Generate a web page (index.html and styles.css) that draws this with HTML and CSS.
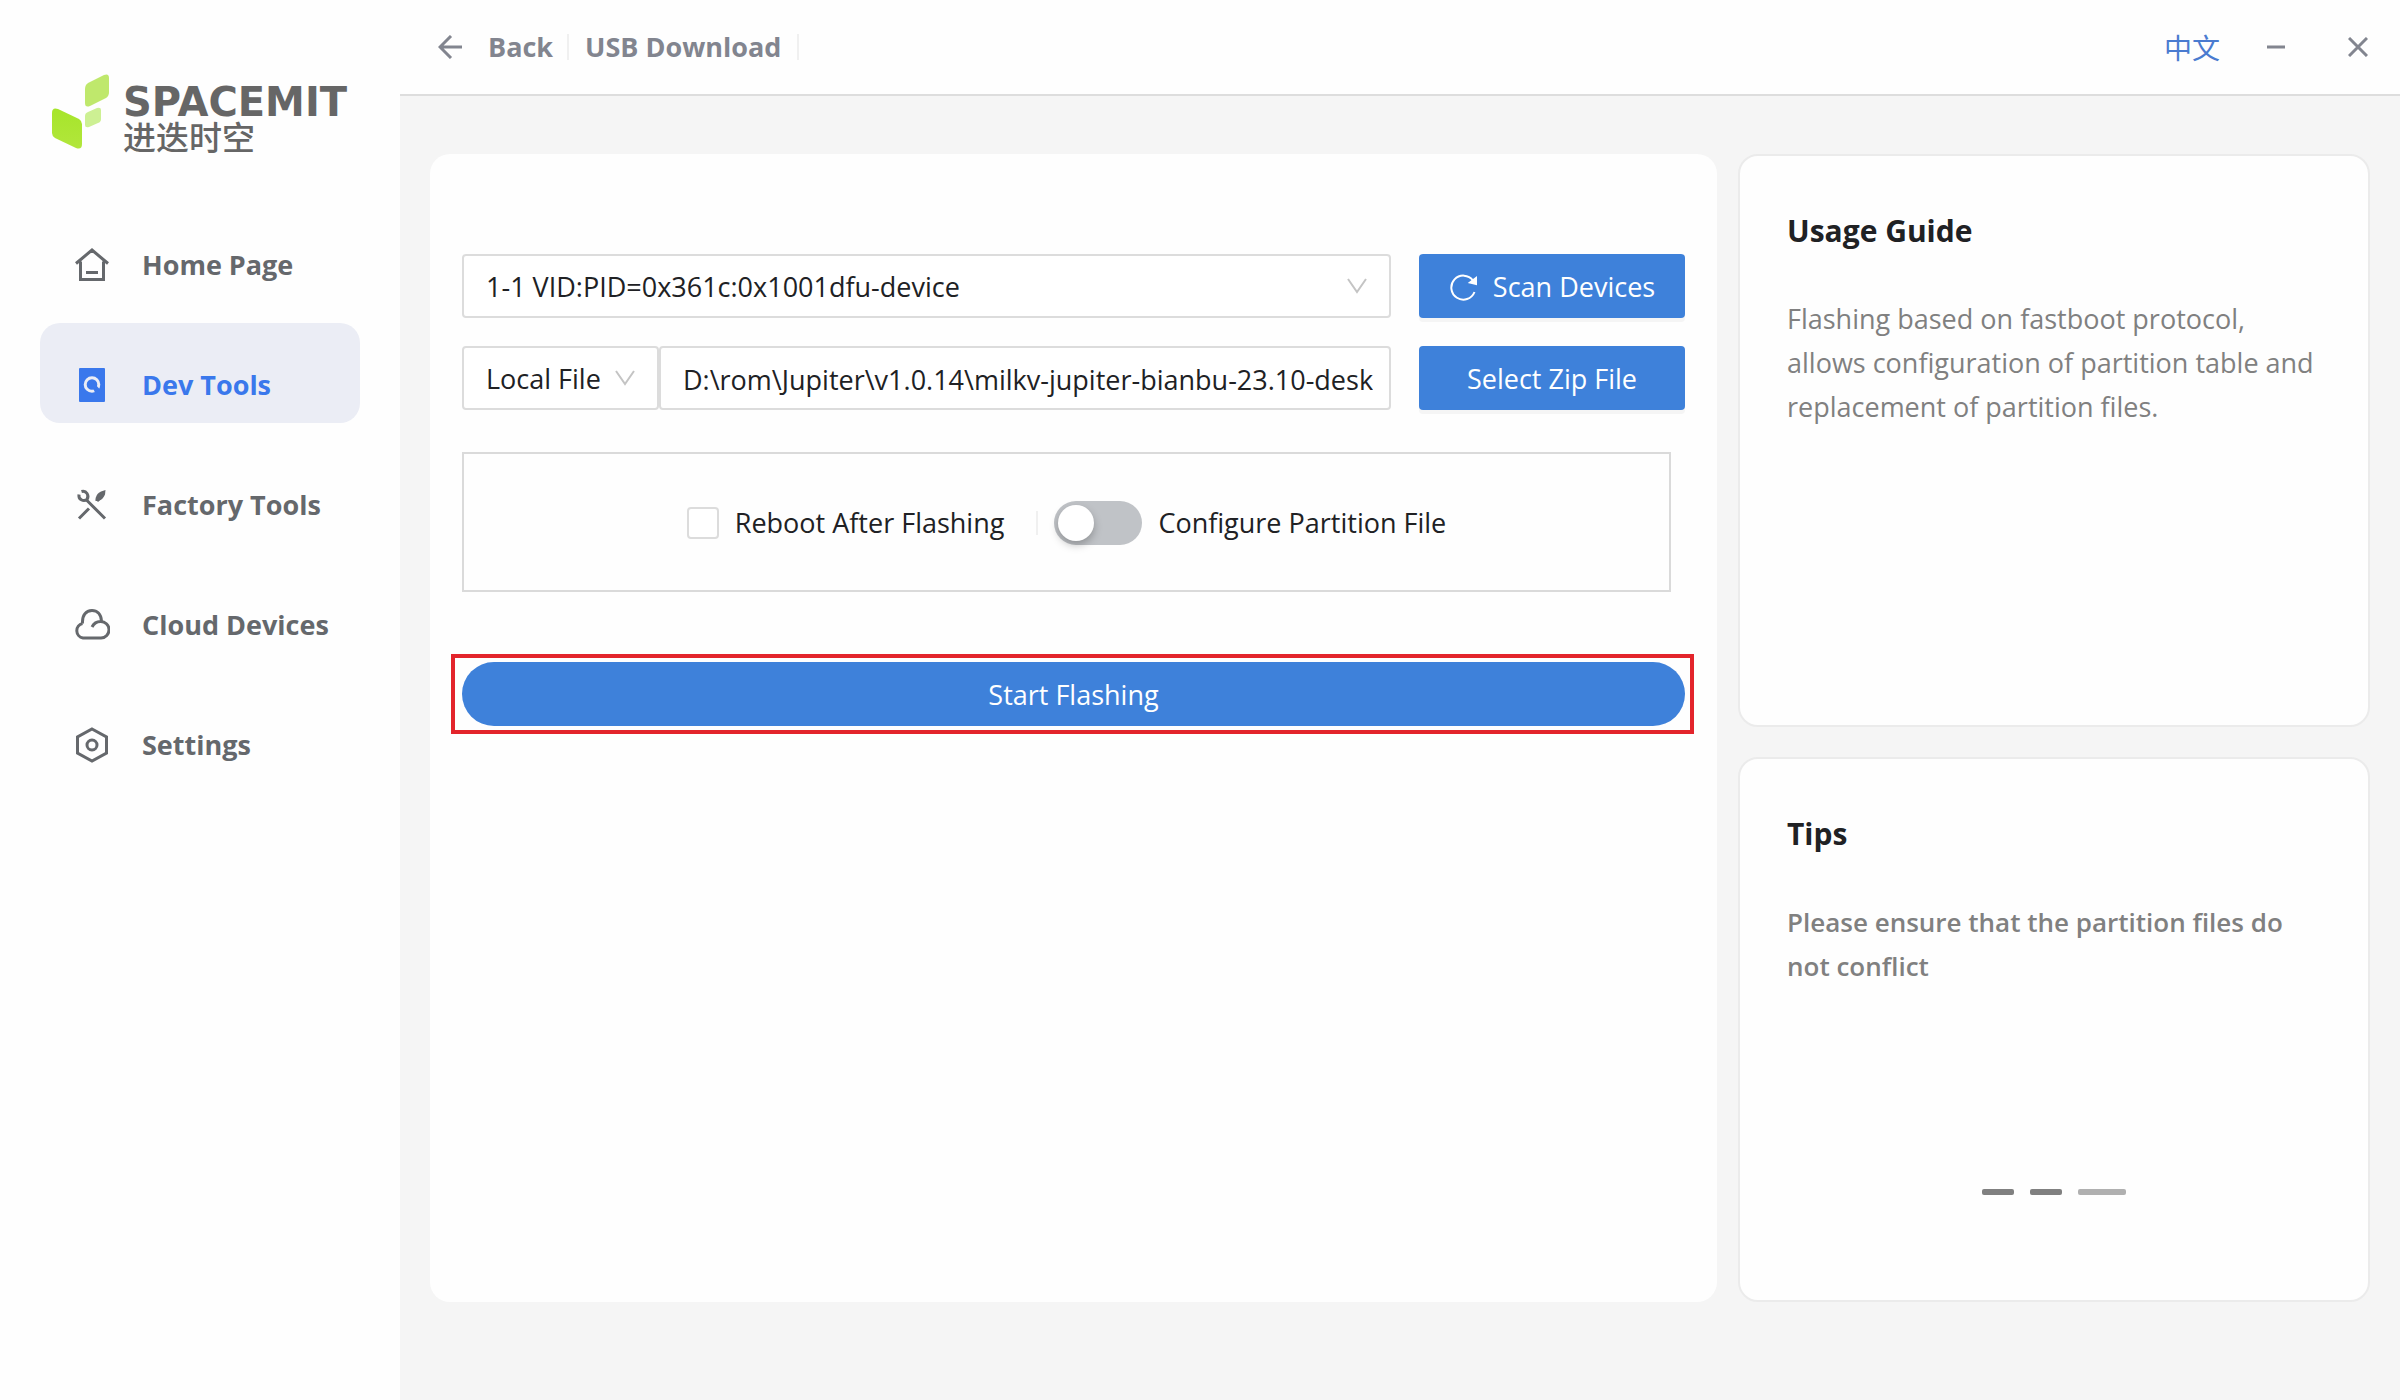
FILE: index.html
```html
<!DOCTYPE html>
<html lang="en">
<head>
<meta charset="utf-8">
<meta name="viewport" content="width=device-width, initial-scale=1">
<title>USB Download</title>
<link rel="stylesheet" href="styles.css">
</head>
<body>
<div class="app">
  <aside class="sidebar">
    <div class="brand">
      <svg class="brand-mark" viewBox="0 0 60 76" aria-hidden="true">
        <defs>
          <linearGradient id="leaf" x1="0" y1="0" x2="0" y2="1"><stop offset="0" stop-color="#a6e52a"/><stop offset="1" stop-color="#b2e63c"/></linearGradient>
        </defs>
        <path fill="url(#leaf)" d="M1 39q0-6 6-4l21 10q3 2 3 5v20q0 6-6 4L4 64q-3-2-3-5z"/>
        <path fill="#bfe86c" d="M34 15q0-4 3-6L53 1q5-2 5 3v14q0 4-3 6L39 32q-5 2-5-3z"/>
        <path fill="#cdf093" d="M34 42q0-3 3-4l9-4q4-1 4 2v9q0 3-3 4l-9 4q-4 1-4-2z"/>
      </svg>
      <div class="brand-text">
        <span class="brand-name">SPACEMIT</span>
        <span class="brand-sub" lang="zh">进迭时空</span>
      </div>
    </div>
    <nav class="nav" aria-label="Main">
      <a class="nav-item" href="#home">
        <svg class="nav-icon" viewBox="0 0 36 36" aria-hidden="true"><path d="M2 16.500 18 3l16 13.500M6.500 14.500V32.500h23V14.500M12 25.500h12"/></svg>
        Home Page
      </a>
      <a class="nav-item nav-item-active" href="#dev" aria-current="page">
        <svg class="nav-icon" viewBox="0 0 36 36" aria-hidden="true"><rect class="solid" x="5" y="1" width="26" height="34" rx="1"/><circle class="dial" cx="18" cy="17.500" r="6.800"/><path class="solid" d="M17 17l3-1 6 6.500-3 3h-2z"/></svg>
        Dev Tools
      </a>
      <a class="nav-item" href="#factory">
        <svg class="nav-icon" viewBox="0 0 36 36" aria-hidden="true"><path d="M12.500 13 31 31.500M5 31.500l10-10M23 14l3.500-3.500"/><path d="M7.500 4.500c5-1.500 8 4 5.500 8-3.500 2.500-9 0-8-5"/><path class="solid" d="M21.500 14c-.5-4 2-8 5.500-9.500l4.500-1.500L31 7.500c-1.500 4-5 7-9.500 6.500z"/></svg>
        Factory Tools
      </a>
      <a class="nav-item" href="#cloud">
        <svg class="nav-icon" viewBox="0 0 36 36" aria-hidden="true"><path d="M8.500 16.500C8 8 12 3.500 18 3.500c5 0 9 3.500 9.500 10.500M18 20c2-4 5-5.500 8.500-5.500a8 8 0 0 1 .5 16.500H9a7.400 7.400 0 0 1-.5-14.500"/></svg>
        Cloud Devices
      </a>
      <a class="nav-item" href="#settings">
        <svg class="nav-icon" viewBox="0 0 36 36" aria-hidden="true"><path d="M18 2 32.500 10v16L18 34 3.500 26V10z"/><circle cx="18" cy="18" r="5"/></svg>
        Settings
      </a>
    </nav>
  </aside>

  <div class="content">
    <header class="topbar">
      <button class="back" type="button">
        <svg class="back-icon" viewBox="0 0 24 24" aria-hidden="true"><path d="M13 1 2 12l11 11M2 12h22"/></svg>
        Back
      </button>
      <h1 class="page-title">USB Download</h1>
      <div class="window-tools">
        <button class="lang" type="button" lang="zh">中文</button>
        <button class="win-button" type="button" aria-label="Minimize"><svg class="win-icon" viewBox="0 0 20 20" aria-hidden="true"><path d="M1 10h18"/></svg></button>
        <button class="win-button" type="button" aria-label="Close"><svg class="win-icon" viewBox="0 0 20 20" aria-hidden="true"><path d="M1 1l18 18M19 1 1 19"/></svg></button>
      </div>
    </header>

    <main class="workspace">
      <form class="panel flash-form">
        <div class="form-row">
          <div class="select-box">
            <select class="field" aria-label="Device"><option>1-1 VID:PID=0x361c:0x1001dfu-device</option></select>
            <svg class="chevron" viewBox="0 0 20 16" aria-hidden="true"><path d="M1 1l9 13 9-13"/></svg>
          </div>
          <button class="action" type="button">
            <svg class="action-icon" viewBox="0 0 28 28" aria-hidden="true"><path d="M25.500 19A12 12 0 1 1 24 7.500"/><path class="tip" d="M27 5v6l-6-1.500z"/></svg>
            Scan Devices
          </button>
        </div>
        <div class="form-row">
          <div class="source">
            <div class="select-box">
              <select class="field" aria-label="Image source"><option>Local File</option></select>
              <svg class="chevron" viewBox="0 0 20 16" aria-hidden="true"><path d="M1 1l9 13 9-13"/></svg>
            </div>
            <input class="field path" type="text" aria-label="Image path" value="D:\rom\Jupiter\v1.0.14\milkv-jupiter-bianbu-23.10-desk">
          </div>
          <button class="action" type="button">Select Zip File</button>
        </div>
        <div class="options">
          <label class="option reboot"><input class="check" type="checkbox">Reboot After Flashing</label>
          <label class="option"><input class="switch" type="checkbox" role="switch">Configure Partition File</label>
        </div>
        <div class="highlight">
          <button class="start" type="submit">Start Flashing</button>
        </div>
      </form>

      <section class="panel info">
        <h2 class="info-title">Usage Guide</h2>
        <p class="info-text">Flashing based on fastboot protocol, allows configuration of partition table and replacement of partition files.</p>
      </section>
      <section class="panel info">
        <h2 class="info-title">Tips</h2>
        <p class="info-text info-strong">Please ensure that the partition files do not conflict</p>
        <div class="pager">
          <button class="dash" type="button" aria-label="Tip 1"></button>
          <button class="dash" type="button" aria-label="Tip 2"></button>
          <button class="dash dash-active" type="button" aria-label="Tip 3"></button>
        </div>
      </section>
    </main>
  </div>
</div>
</body>
</html>
```
FILE: styles.css
```css
* {
  box-sizing: border-box;
}

body {
  margin: 0;
  font: 400 27px/44px "Open Sans", "Noto Sans", "Noto Sans CJK SC", sans-serif;
  color: #202124;
  background: #f5f5f5;
}

button,
input,
select {
  margin: 0;
  font: inherit;
  color: inherit;
}

button {
  padding: 0;
  border: 0;
  background: none;
  cursor: pointer;
}

svg {
  display: block;
  flex: none;
  fill: none;
  stroke: currentColor;
}

.app {
  display: grid;
  grid-template-columns: 400px minmax(0, 1fr);
  min-height: 100vh;
}

/* Sidebar */
.sidebar {
  padding: 74px 40px 40px;
  background: #fefefe;
}

.brand {
  display: flex;
  gap: 12px;
  height: 76px;
  margin: 0 0 53px 11px;
}

.brand-mark {
  width: 60px;
  height: 76px;
  stroke: none;
}

.brand-text {
  display: flex;
  flex-direction: column;
  padding-top: 12px;
  font-weight: 700;
  color: #666;
}

.brand-name {
  font-family: "DejaVu Sans", sans-serif;
  font-size: 40px;
  line-height: 32px;
}

.brand-sub {
  font-family: "Noto Sans CJK SC", sans-serif;
  font-size: 33px;
  font-weight: 500;
  line-height: 36px;
}

.nav {
  display: grid;
  gap: 20px;
}

.nav-item {
  display: flex;
  align-items: center;
  gap: 32px;
  height: 100px;
  padding: 24px 0 0 34px;
  border-radius: 20px;
  font-weight: 700;
  color: #65686c;
  text-decoration: none;
  white-space: nowrap;
}

.nav-item-active {
  background: #ebedf5;
  color: #3a78ec;
}

.nav-icon {
  width: 36px;
  height: 36px;
  stroke-width: 3;
}

.nav-icon .solid {
  fill: currentColor;
  stroke: none;
}

.nav-icon .dial {
  stroke: #ebedf5;
}

/* Top bar */
.content {
  display: flex;
  flex-direction: column;
}

.topbar {
  display: flex;
  align-items: center;
  height: 96px;
  padding: 0 30px 0 38px;
  border-bottom: 2px solid #ddd;
  background: #fefefe;
  color: #82858f;
}

.back,
.page-title {
  display: flex;
  align-items: center;
  height: 26px;
  border-right: 2px solid #f0f0f0;
  font-size: 27px;
  font-weight: 700;
}

.back {
  gap: 26px;
  padding-right: 14px;
}

.page-title {
  margin: 0;
  padding: 0 16px;
}

.back-icon {
  width: 24px;
  height: 24px;
  stroke-width: 3;
}

.window-tools {
  display: flex;
  align-items: center;
  gap: 44px;
  margin-left: auto;
}

.lang {
  font-family: "Noto Sans CJK SC", sans-serif;
  font-size: 28px;
  color: #4a7bd0;
}

.win-button {
  display: grid;
  place-items: center;
  width: 24px;
  height: 36px;
}

.win-button + .win-button {
  margin-left: 14px;
}

.win-icon {
  width: 20px;
  height: 20px;
  stroke-width: 3;
}

/* Workspace */
.workspace {
  flex: 1;
  display: grid;
  grid-template-columns: minmax(0, 1fr) 632px;
  grid-template-rows: 573fr 545fr;
  gap: 30px 21px;
  padding: 58px 30px 98px;
}

.panel {
  border-radius: 20px;
  background: #fefefe;
}

.flash-form {
  grid-row: 1 / 3;
  padding: 100px 32px 32px;
}

.form-row {
  display: grid;
  grid-template-columns: minmax(0, 1fr) 266px;
  gap: 28px;
  margin-bottom: 28px;
}

.field {
  width: 100%;
  height: 64px;
  padding: 2px 22px 0;
  border: 2px solid #dcdcdc;
  border-radius: 4px;
  background: #fff;
  appearance: none;
  outline: 0;
}

.path {
  padding-right: 16px;
}

.select-box {
  position: relative;
}

.chevron {
  position: absolute;
  top: 24px;
  right: 24px;
  width: 20px;
  height: 16px;
  color: #c4c4c4;
  stroke-width: 2;
  pointer-events: none;
}

.source {
  display: grid;
  grid-template-columns: 197px minmax(0, 1fr);
}

.action,
.start {
  display: flex;
  align-items: center;
  justify-content: center;
  gap: 16px;
  height: 64px;
  padding-top: 2px;
  border-radius: 4px;
  background: #3e81da;
  color: #fff;
}

.action {
  box-shadow: 0 4px 0 #f5f5f5;
}

.action-icon {
  width: 28px;
  height: 28px;
  stroke-width: 2;
}

.action-icon .tip {
  fill: currentColor;
}

.options {
  display: flex;
  align-items: center;
  justify-content: center;
  gap: 16px;
  height: 140px;
  margin: 42px 14px 0 0;
  padding-top: 2px;
  border: 2px solid #dadada;
}

.option {
  display: flex;
  align-items: center;
  gap: 16px;
}

.reboot::after {
  content: "";
  width: 2px;
  height: 24px;
  margin-left: 16px;
  background: #f0f0f0;
}

.check {
  appearance: none;
  width: 32px;
  height: 32px;
  margin: 0;
  border: 2px solid #dcdcdc;
  border-radius: 4px;
  background: #fff;
}

.switch {
  appearance: none;
  width: 88px;
  height: 44px;
  margin: 0;
  padding: 4px;
  border-radius: 22px;
  background: #c0c3c7;
}

.switch::before {
  content: "";
  display: block;
  width: 36px;
  height: 36px;
  border-radius: 50%;
  background: #fff;
  box-shadow: 0 4px 8px rgba(0, 0, 0, 0.25);
}

.check:checked {
  background: #3e81da;
}

.switch:checked {
  padding-left: 48px;
  background: #3e81da;
}

.highlight {
  margin: 62px -9px 0 -11px;
  padding: 4px 5px 4px 7px;
  border: 4px solid #e3242b;
}

.start {
  width: 100%;
  border-radius: 32px;
}

/* Right-hand cards */
.info {
  display: flex;
  flex-direction: column;
  padding: 53px 47px;
  border: 2px solid #ebebeb;
}

.info-title {
  margin: 0 0 44px;
  font-size: 30px;
  line-height: 44px;
  font-weight: 700;
}

.info-text {
  margin: 0;
  color: #808080;
}

.info-strong {
  font-size: 26px;
  font-weight: 600;
}

.pager {
  display: flex;
  justify-content: center;
  gap: 16px;
  margin-top: auto;
  padding-bottom: 52px;
}

.dash {
  width: 32px;
  height: 6px;
  border-radius: 2px;
  background: #808080;
}

.dash-active {
  width: 48px;
  background: #b0b0b0;
}
```
